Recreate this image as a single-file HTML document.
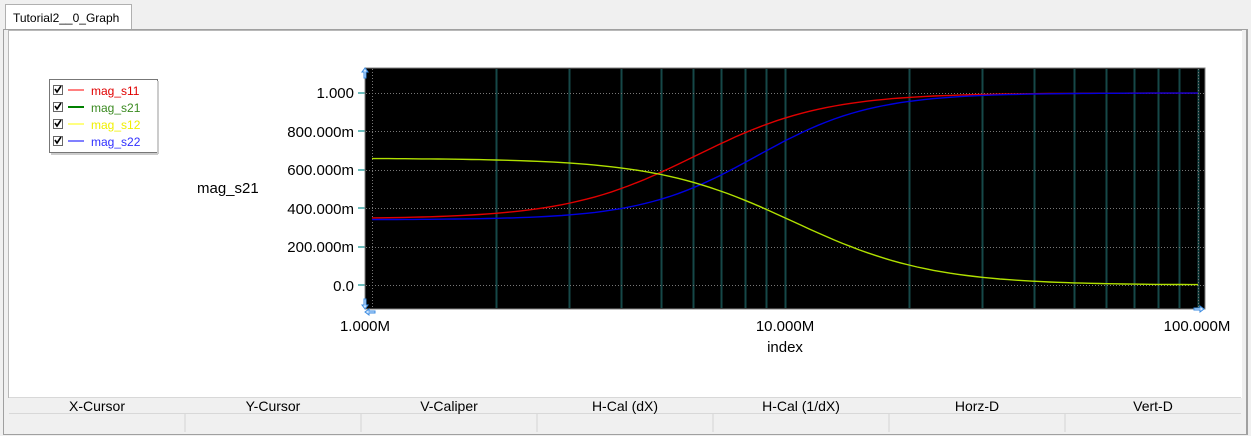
<!DOCTYPE html>
<html><head><meta charset="utf-8"><style>
body{margin:0;width:1251px;height:436px;background:#f0f0f0;font-family:"Liberation Sans",sans-serif;overflow:hidden;position:relative}
.abs{position:absolute}
</style></head><body>
<div class="abs" style="left:3px;top:29px;width:1243px;height:404px;border:1px solid #a0a0a0;background:#f0f0f0"></div>
<div class="abs" style="left:5px;top:4px;width:127px;height:25px;border:1px solid #b0b0b0;border-bottom:none;background:#fff;font-size:12px;line-height:26px;padding-left:7px;box-sizing:border-box">Tutorial2__0_Graph</div>
<div class="abs" style="left:8px;top:30px;width:1233px;height:367px;background:#fff;border-left:1px solid #b8b8b8;border-top:1px solid #b8b8b8"></div>
<div class="abs" style="left:9px;top:397px;width:1232px;height:36px;background:#f0f0f0;border-top:1px solid #d8d8d8"></div>
<div class="abs" style="left:9px;top:413px;width:1232px;height:1px;background:#d8d8d8"></div>
<div class="abs" style="left:1246px;top:29px;width:1px;height:405px;background:#a0a0a0"></div>
<svg class="abs" style="left:0;top:0" width="1251" height="436" font-family="Liberation Sans, sans-serif">
<g font-size="14" fill="#000" text-anchor="middle">
<text x="97" y="411">X-Cursor</text><text x="273" y="411">Y-Cursor</text><text x="449" y="411">V-Caliper</text><text x="625" y="411">H-Cal (dX)</text><text x="801" y="411">H-Cal (1/dX)</text><text x="977" y="411">Horz-D</text><text x="1153" y="411">Vert-D</text>
</g>
<g stroke="#d4d4d4"><line x1="185" y1="414" x2="185" y2="432"/><line x1="361" y1="414" x2="361" y2="432"/><line x1="537" y1="414" x2="537" y2="432"/><line x1="713" y1="414" x2="713" y2="432"/><line x1="889" y1="414" x2="889" y2="432"/><line x1="1065" y1="414" x2="1065" y2="432"/></g>
<rect x="49.5" y="79.5" width="108" height="73" fill="#fff" stroke="#777"/>
<line x1="158" y1="81" x2="158" y2="154" stroke="#ccc" stroke-width="2"/>
<line x1="51" y1="154" x2="158" y2="154" stroke="#ccc" stroke-width="2"/>
<g font-size="12">
<g><rect x="53.5" y="85.5" width="9" height="9" fill="#fff" stroke="#666"/><path d="M55 89l2 3 4-6" stroke="#000" stroke-width="1.6" fill="none"/><line x1="68" y1="90" x2="84" y2="90" stroke="#ff8080" stroke-width="2"/><text x="91" y="95" fill="#e00000">mag_s11</text></g>
<g transform="translate(0,17)"><rect x="53.5" y="85.5" width="9" height="9" fill="#fff" stroke="#666"/><path d="M55 89l2 3 4-6" stroke="#000" stroke-width="1.6" fill="none"/><line x1="68" y1="90" x2="84" y2="90" stroke="#008000" stroke-width="2"/><text x="91" y="95" fill="#3a8a20">mag_s21</text></g>
<g transform="translate(0,34)"><rect x="53.5" y="85.5" width="9" height="9" fill="#fff" stroke="#666"/><path d="M55 89l2 3 4-6" stroke="#000" stroke-width="1.6" fill="none"/><line x1="68" y1="90" x2="84" y2="90" stroke="#ffff80" stroke-width="2"/><text x="91" y="95" fill="#f0f000">mag_s12</text></g>
<g transform="translate(0,51)"><rect x="53.5" y="85.5" width="9" height="9" fill="#fff" stroke="#666"/><path d="M55 89l2 3 4-6" stroke="#000" stroke-width="1.6" fill="none"/><line x1="68" y1="90" x2="84" y2="90" stroke="#8080ff" stroke-width="2"/><text x="91" y="95" fill="#3030ff">mag_s22</text></g>
</g>
<g font-size="15" fill="#000" text-anchor="end">
<text x="354" y="98">1.000</text><text x="354" y="137">800.000m</text><text x="354" y="175">600.000m</text><text x="354" y="214">400.000m</text><text x="354" y="252">200.000m</text><text x="354" y="291">0.0</text>
</g>
<text x="197" y="193" font-size="15">mag_s21</text>
<g font-size="15" text-anchor="middle"><text x="365" y="331">1.000M</text><text x="785" y="331">10.000M</text><text x="1197" y="331">100.000M</text><text x="785" y="352">index</text></g>
<g stroke="#6bbcbc" stroke-width="2"><line x1="358" y1="93" x2="365" y2="93"/><line x1="358" y1="131" x2="365" y2="131"/><line x1="358" y1="170" x2="365" y2="170"/><line x1="358" y1="208" x2="365" y2="208"/><line x1="358" y1="247" x2="365" y2="247"/><line x1="358" y1="285" x2="365" y2="285"/></g>
<rect x="365" y="68" width="840" height="241" fill="#000" stroke="#808080"/>
<g id="grid"></g>
<g id="curves" fill="none" stroke-width="1.4"></g>
<path d="M365 68l-3 4h2v6h2v-6h2z" fill="#cfe6ff" stroke="#3b8be0"/>
<path d="M365 309l-3-4h2v-6h2v6h2z" fill="#cfe6ff" stroke="#3b8be0"/>
<path d="M365 312l4-3v2h6v2h-6v2z" fill="#cfe6ff" stroke="#3b8be0"/>
<path d="M1204 309l-4-3v2h-6v2h6v2z" fill="#cfe6ff" stroke="#3b8be0"/>
</svg>
<script>
var ns="http://www.w3.org/2000/svg",g=document.getElementById('grid'),c=document.getElementById('curves');
function el(p,t,a){var e=document.createElementNS(ns,t);for(var k in a)e.setAttribute(k,a[k]);p.appendChild(e);}
var x0=372,dec=413;
for(var d=0;d<2;d++)for(var k=2;k<=10;k++){var x=Math.round(x0+dec*(d+Math.log10(k)))+0.5;if(x<1200)el(g,'line',{x1:x,y1:69,x2:x,y2:308,stroke:'#164848','stroke-width':2});}
[93,131,170,208,247,285].forEach(function(y){el(g,'line',{x1:366,y1:y+.5,x2:1204,y2:y+.5,stroke:'#777','stroke-dasharray':'1,2'});});
[372,1198].forEach(function(x){el(g,'line',{x1:x+.5,y1:69,x2:x+.5,y2:308,stroke:'#777','stroke-dasharray':'1,2'});});
function L(z){return 1/(1+Math.exp(-z));}
var fs=[function(l){return .345+.655*L((l-.783)/.156)},function(l){return .34+.66*L((l-.93)/.14)},function(l){return .66*(1-L((l-1.02)/.167))}];
var cols=['#e00000','#0000e0','#b0e000'];
fs.forEach(function(f,i){var p=[];for(var j=0;j<=100;j++){var l=j/50;p.push((x0+dec*l).toFixed(1)+','+(285-192*f(l)).toFixed(1));}el(c,'polyline',{points:p.join(' '),stroke:cols[i]});});
</script>
</body></html>
